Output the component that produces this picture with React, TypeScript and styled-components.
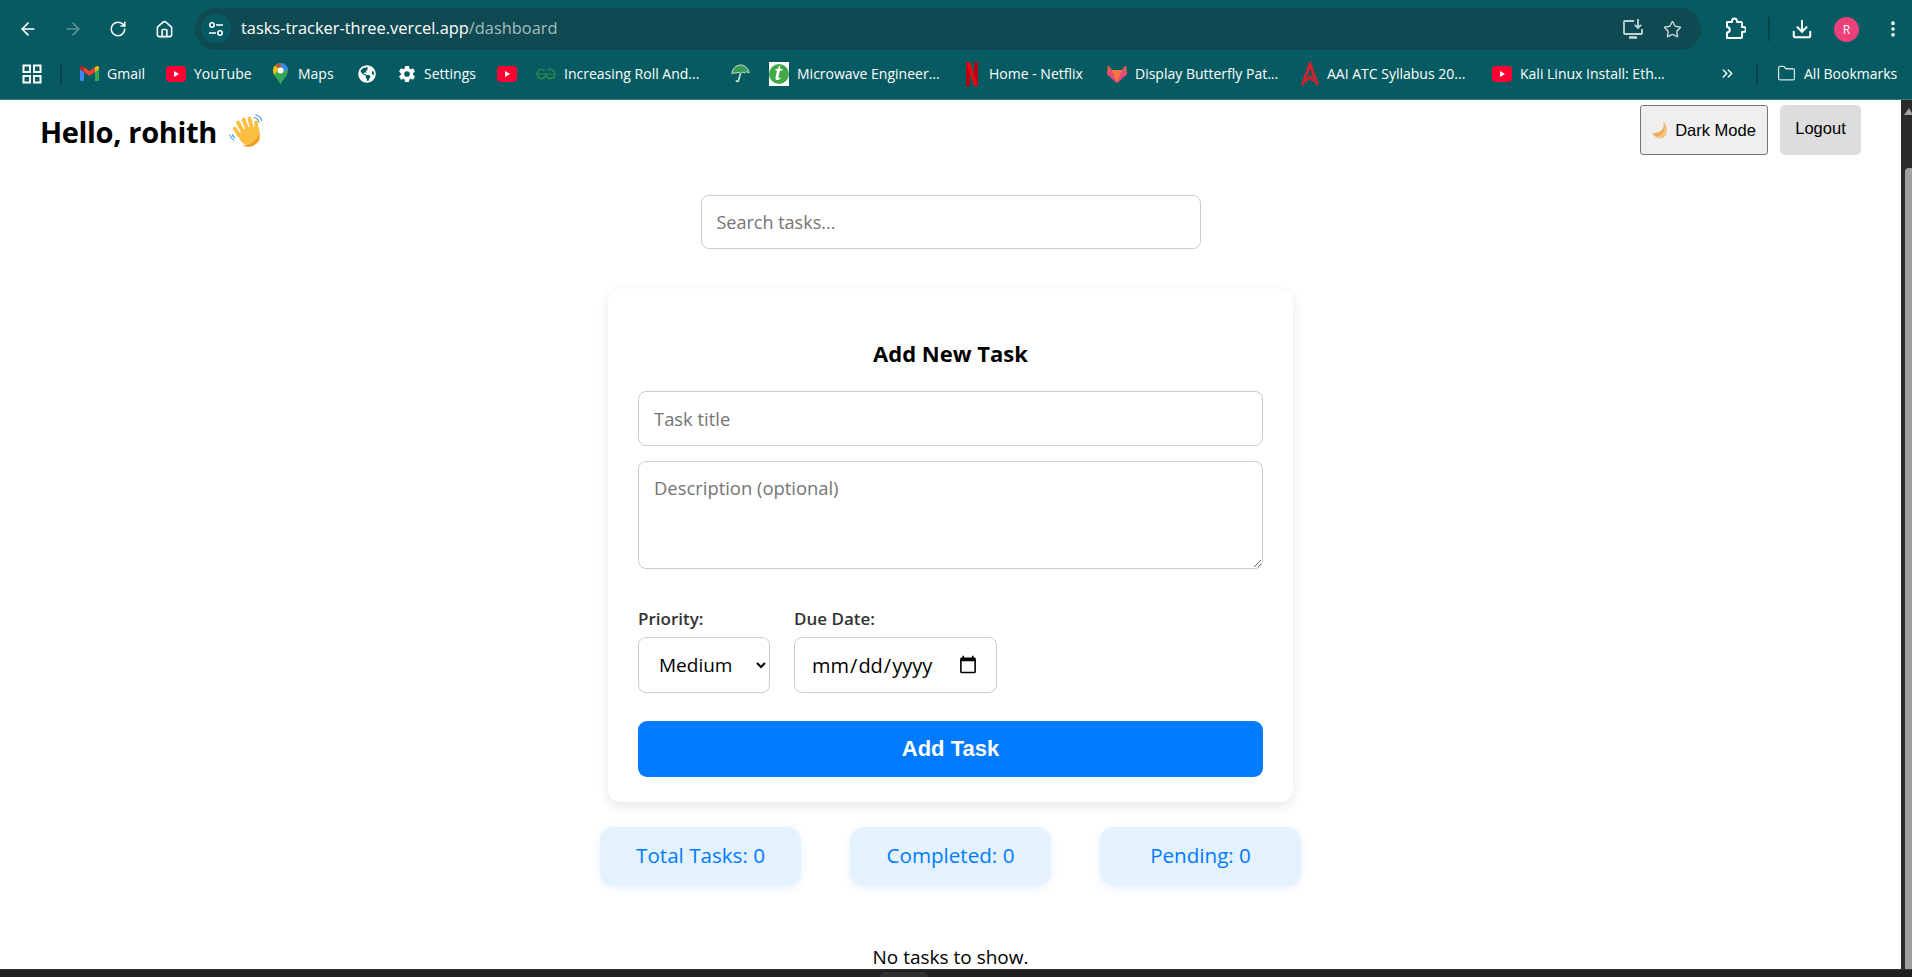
import React from "react";
import styled, { createGlobalStyle } from "styled-components";
import {
  ArrowLeft,
  ArrowRight,
  RotateCw,
  Home,
  Star,
  Download,
  EllipsisVertical,
  Folder,
  ChevronsRight,
} from "lucide-react";
import { IoSettingsSharp } from "react-icons/io5";
import { FaGlobeAmericas } from "react-icons/fa";

const UI = `"Open Sans", "Noto Sans", sans-serif`;

const Global = createGlobalStyle`
  html, body { margin: 0; padding: 0; height: 100%; overflow: hidden; background: #fff; }
  * { box-sizing: border-box; }
  #root { height: 100%; }
`;

const Shell = styled.div`
  height: 977px;
  display: flex;
  flex-direction: column;
  font-family: ${UI};
  color: #000;
`;

const Chrome = styled.header`
  flex: 0 0 100px;
  background: #055b61;
  border-bottom: 1px solid #3a7b80;
  display: flex;
  flex-direction: column;
  color: #fff;
`;

const NavRow = styled.div`
  height: 50px;
  display: flex;
  align-items: center;
  padding: 8px 0 0 5px;
`;

const NavButton = styled.span<{ $w: number; $dim?: boolean }>`
  flex: 0 0 ${(p) => p.$w}px;
  display: flex;
  align-items: center;
  justify-content: center;
  color: ${(p) => (p.$dim ? "#5d9296" : "#ffffff")};
`;

const Omnibox = styled.div`
  flex: 0 0 1506px;
  height: 42px;
  margin: 0 23px 0 8px;
  border-radius: 21px;
  background: #0f4a52;
  display: flex;
  align-items: center;
  padding: 0 19px 0 6px;
`;

const SiteChip = styled.span`
  width: 30px;
  height: 30px;
  border-radius: 50%;
  background: #055b61;
  display: flex;
  align-items: center;
  justify-content: center;
  margin-right: 10px;
`;

const UrlHost = styled.span`
  font-size: 16.4px;
  line-height: 20px;
  padding-bottom: 2px;
  color: #fff;
`;

const UrlPath = styled.span`
  font-size: 16.4px;
  line-height: 20px;
  padding-bottom: 2px;
  color: #a5bdc0;
`;

const OmniActions = styled.span`
  margin-left: auto;
  display: flex;
  align-items: center;
  gap: 19px;
  color: #c3d3d5;
`;

const Divider = styled.span<{ $h?: number; $l: number; $r: number }>`
  flex: 0 0 2px;
  height: ${(p) => p.$h ?? 24}px;
  background: #07444a;
  margin: 0 ${(p) => p.$r}px 0 ${(p) => p.$l}px;
`;

const Avatar = styled.span`
  width: 25px;
  height: 25px;
  border-radius: 50%;
  background: #ec407a;
  color: #fff;
  font-size: 12px;
  display: flex;
  align-items: center;
  justify-content: center;
  margin: 0 24px 0 21px;
`;

const BookmarkRow = styled.nav`
  height: 49px;
  display: flex;
  align-items: center;
  padding-left: 22px;
  padding-bottom: 2px;
  font-size: 14px;
`;

const BookmarkStart = styled.span`
  flex: 0 0 9px;
`;

const Bookmark = styled.span<{ $w: number }>`
  flex: 0 0 ${(p) => p.$w}px;
  display: flex;
  align-items: center;
  gap: 8px;
  white-space: nowrap;
  color: #fff;
`;

const IconSlot = styled.span`
  flex: 0 0 19px;
  height: 20px;
  display: flex;
  align-items: center;
  justify-content: center;
`;

const PageRow = styled.div`
  flex: 1;
  min-height: 0;
  display: flex;
`;

const Page = styled.main`
  flex: 1;
  min-width: 0;
  overflow: hidden;
`;

const Scrollbar = styled.div`
  flex: 0 0 11px;
  background: #2b2b2b;
  position: relative;
`;

const ScrollArrow = styled.div`
  position: absolute;
  top: 8px;
  left: 3px;
  width: 0;
  height: 0;
  border-left: 5px solid transparent;
  border-right: 4px solid transparent;
  border-bottom: 7px solid #a0a0a0;
`;

const ScrollThumb = styled.div`
  position: absolute;
  top: 68px;
  left: 4px;
  right: 0;
  bottom: 0;
  background: #a0a0a0;
  border-radius: 4px 0 0 0;
`;

const BottomBar = styled.div`
  flex: 0 0 8px;
  background: #1f1f1f;
  border-top: 1px solid #333;
  display: flex;
  justify-content: center;
  padding: 2px 0 0 0;
`;

const BottomThumb = styled.div`
  width: 48px;
  margin-right: 104px;
  background: #2f2f2f;
  border-radius: 5px 5px 0 0;
`;

const TopBar = styled.div`
  display: flex;
  align-items: flex-start;
  justify-content: space-between;
  padding: 5px 40px 0 40px;
  height: 95px;
`;

const Greeting = styled.h1`
  margin: 0;
  padding-top: 6px;
  display: flex;
  align-items: center;
  gap: 12px;
  font-size: 29px;
  font-weight: 700;
  line-height: 42px;
  letter-spacing: -0.35px;
`;

const TopActions = styled.div`
  display: flex;
  gap: 12px;
`;

const ModeButton = styled.button`
  height: 50px;
  width: 128px;
  border: 1px solid #767676;
  border-radius: 3px;
  background: #efefef;
  font-family: "Liberation Sans", Arial, sans-serif;
  font-size: 16.5px;
  display: flex;
  align-items: center;
  justify-content: center;
  gap: 7px;
  padding: 0;
  color: #000;
`;

const LogoutButton = styled.button`
  height: 50px;
  width: 81px;
  border: 0;
  border-radius: 5px;
  background: #ddd;
  font-family: "Liberation Sans", Arial, sans-serif;
  font-size: 16.5px;
  padding: 0 0 4px;
  color: #000;
`;

const Center = styled.div`
  display: flex;
  flex-direction: column;
  align-items: center;
`;

const fieldBase = `
  border: 1px solid #ccc;
  border-radius: 8px;
  background: #fff;
  font-family: ${UI};
  font-size: 18.4px;
  outline: none;
  &::placeholder { color: #757575; }
`;

const SearchInput = styled.input`
  ${fieldBase}
  width: 500px;
  height: 54px;
  padding: 0 15px;
  font-size: 18px;
`;

const Card = styled.section`
  margin-top: 40px;
  width: 685px;
  height: 513px;
  border-radius: 12px;
  background: #fff;
  box-shadow: 0 4px 12px rgba(0, 0, 0, 0.1);
  padding: 50px 30px 0;
  display: flex;
  flex-direction: column;
`;

const CardTitle = styled.h2`
  margin: 0 0 24px;
  text-align: center;
  font-size: 22px;
  line-height: 28px;
  font-weight: 700;
`;

const TitleInput = styled.input`
  ${fieldBase}
  height: 55px;
  padding: 0 15px;
  margin-bottom: 15px;
`;

const DescArea = styled.textarea`
  ${fieldBase}
  height: 108px;
  padding: 13px 15px;
  margin-bottom: 39px;
  display: block;
  resize: vertical;
`;

const Options = styled.div`
  display: flex;
  gap: 24px;
`;

const OptionGroup = styled.label`
  display: flex;
  flex-direction: column;
  gap: 7px;
  font-size: 17px;
  line-height: 22px;
  font-weight: 600;
  color: #333;
`;

const PrioritySelect = styled.select`
  ${fieldBase}
  width: 132px;
  height: 56px;
  padding: 0 0 0 16px;
  font-size: 19px;
  color: #000;
`;

const DateInput = styled.input`
  ${fieldBase}
  width: 203px;
  height: 56px;
  padding: 0 16px;
  font-size: 20px;
  color: #000;
`;

const AddButton = styled.button`
  margin-top: 28px;
  height: 56px;
  border: 0;
  border-radius: 9px;
  background: #007bff;
  color: #fff;
  font-family: "Liberation Sans", Arial, sans-serif;
  font-size: 22px;
  font-weight: 700;
`;

const Stats = styled.div`
  margin-top: 25px;
  display: flex;
  gap: 49px;
`;

const Stat = styled.div`
  width: 201px;
  height: 59px;
  border-radius: 14px;
  background: #e3f2fd;
  color: #007bff;
  box-shadow: 0 2px 8px rgba(0, 123, 255, 0.1);
  font-size: 20.6px;
  font-weight: 500;
  padding-bottom: 4px;
  display: flex;
  align-items: center;
  justify-content: center;
`;

const EmptyNote = styled.p`
  margin: 59px 0 0;
  font-size: 19px;
  line-height: 24px;
  color: #000;
  text-align: center;
`;

const TuneIcon = () => (
  <svg width="18" height="18" viewBox="0 0 18 18" fill="none" stroke="#fff" strokeWidth="1.6">
    <circle cx="5" cy="5" r="2.2" />
    <path d="M9 5h7M2 13h7" />
    <circle cx="13" cy="13" r="2.2" />
  </svg>
);

const AppsIcon = () => (
  <svg width="20" height="20" viewBox="0 0 20 20" fill="none" stroke="#fff" strokeWidth="2">
    <rect x="1.500" y="1.500" width="6.500" height="6.500" />
    <rect x="12" y="1.500" width="6.500" height="6.500" />
    <rect x="1.500" y="12" width="6.500" height="6.500" />
    <rect x="12" y="12" width="6.500" height="6.500" />
  </svg>
);

const InstallIcon = () => (
  <svg width="22" height="22" viewBox="0 0 22 22" fill="none" stroke="#c3d3d5" strokeWidth="1.800">
    <path d="M12 3H3a1 1 0 0 0-1 1v11a1 1 0 0 0 1 1h16a1 1 0 0 0 1-1v-4" />
    <path d="M16 1v9M12.800 6.800L16 10l3.200-3.200" />
    <path d="M7 19.500h8" strokeWidth="2.600" />
  </svg>
);

const ExtensionIcon = () => (
  <svg width="22" height="24" viewBox="0 0 22 24" fill="none" stroke="#fff" strokeWidth="2" strokeLinejoin="round">
    <path d="M3 5h5V4a2.500 2.500 0 0 1 5 0v1h4a1 1 0 0 1 1 1v4h1.500a2.500 2.500 0 0 1 0 5H18v5a1 1 0 0 1-1 1H3v-5.500a2.700 2.700 0 0 0 0-5.500z" />
  </svg>
);

const GmailIcon = () => (
  <svg width="19" height="15" viewBox="0 0 19 15">
    <path d="M0 3v10.500A1.500 1.500 0 0 0 1.500 15H4V6z" fill="#4285f4" />
    <path d="M15 15h2.500a1.500 1.500 0 0 0 1.500-1.500V3l-4 3z" fill="#34a853" />
    <path d="M15 1v5l4-3V1.800C19 .4 17.500-.4 16.400.5z" fill="#fbbc04" />
    <path d="M4 6V1L9.500 5 15 1v5l-5.500 4z" fill="#ea4335" />
    <path d="M0 1.800V3l4 3V1L2.600.500C1.500-.4 0 .4 0 1.800z" fill="#c5221f" />
  </svg>
);

const YouTubeIcon = () => (
  <svg width="20" height="16" viewBox="0 0 20 16">
    <rect width="20" height="16" rx="4" fill="#ff0033" />
    <path d="M8 5l5 3-5 3z" fill="#fff" />
  </svg>
);

const MapsIcon = () => (
  <svg width="15" height="22" viewBox="0 0 15 22">
    <path d="M7.500 22C6.500 17 0 13.500 0 7.500a7.500 7.500 0 0 1 15 0C15 13.500 8.500 17 7.500 22z" fill="#34a853" />
    <path d="M2 2.500A7.500 7.500 0 0 1 7.500 0v5z" fill="#ea4335" />
    <path d="M7.500 0A7.500 7.500 0 0 1 15 7.500l-5 0z" fill="#4285f4" />
    <path d="M0 7.500A7.500 7.500 0 0 1 2 2.500l3.500 3.500L1.500 12A8 8 0 0 1 0 7.500z" fill="#fbbc04" />
    <circle cx="7.500" cy="7.500" r="3" fill="#fff" />
  </svg>
);

const GeeksIcon = () => (
  <svg width="20" height="12" viewBox="0 0 20 12" fill="none" stroke="#2f8d46" strokeWidth="1.200">
    <path d="M1 6h18M10 6a4.500 4.500 0 1 1-1.500-3.500M10 6a4.500 4.500 0 1 0 1.500-3.500M1 6a4.500 4.500 0 0 0 8 3M19 6a4.500 4.500 0 0 1-8 3" />
  </svg>
);

const UmbrellaIcon = () => (
  <svg width="19" height="20" viewBox="0 0 19 20">
    <path d="M1 10C1 4 6 1 10 1s8 4 8 8c-2-1.500-3-1.500-4.500 0C12 8 11 8 9.500 9.500 8 8 6 8 5 9.500 4 8.500 2.500 8.500 1 10z" fill="#3c9a57" stroke="#cfe5d4" strokeWidth="1" />
    <path d="M9.500 9.500l-2 7c-.3 1.500-2.300 1.200-2.200-.4" fill="none" stroke="#d6e8da" strokeWidth="1.500" />
  </svg>
);

const TutorialIcon = () => (
  <svg width="20" height="24" viewBox="0 0 20 24">
    <rect width="20" height="24" fill="#fff" />
    <circle cx="10" cy="12" r="10" fill="#43a846" />
    <path d="M11 3l-2.500 4H6.500v1.500h1.500l-1.500 7c-.5 3 2.500 3.500 5 1l-.4-.9c-1 .7-1.900.7-1.700-.3L11 8.500h2.500V7H11.200z" fill="#fff" />
  </svg>
);

const NetflixIcon = () => (
  <svg width="12" height="24" viewBox="0 0 12 24">
    <path d="M0 0h4v24H0z" fill="#b1060f" />
    <path d="M8 0h4v24H8z" fill="#b1060f" />
    <path d="M0 0h4l8 24H8z" fill="#e50914" />
  </svg>
);

const FoxIcon = () => (
  <svg width="20" height="20" viewBox="0 0 20 20">
    <path d="M1 1l4 5h10l4-5 1 9-10 9L0 10z" fill="#ef5a4c" />
    <path d="M5 6h10l-5 13z" fill="#f07a3c" />
    <path d="M0 10l5-4 5 13zM20 10l-5-4-5 13z" fill="#e74a82" />
  </svg>
);

const AaiIcon = () => (
  <svg width="18" height="24" viewBox="0 0 18 24" fill="none" stroke="#d5202e" strokeWidth="3">
    <path d="M1.500 23L9 2l7.500 21" />
    <path d="M5 19l4-4 4 4" strokeWidth="2.500" />
  </svg>
);

const WaveEmoji = () => (
  <svg width="34" height="36" viewBox="0 0 34 36">
    <g fill="none" stroke="#4f9edb" strokeWidth="1.200" strokeLinecap="round">
      <path d="M25 3.500c2.500.3 4.200 2 5 4.500M26.500 1c3 .4 5.300 2.500 6.300 5.500" />
      <path d="M1 21c.4 2.200 1.700 3.800 3.600 5M3.500 20.500c.3 1.300 1 2.300 2.100 3.100" />
    </g>
    <g fill="#fbbe3f" stroke="#fbbe3f" strokeLinecap="round">
      <path d="M10 21a11 10.500 0 0 0 20 5.500c1.300-3.800 0-8-.6-13L18 14z" strokeWidth="1" />
      <path d="M10 21 L5.800 14.500" strokeWidth="3.800" />
      <path d="M14 18 L9 8.500" strokeWidth="3.800" />
      <path d="M18.500 16 L14.500 5.500" strokeWidth="3.800" />
      <path d="M23 15 L20.500 4.500" strokeWidth="3.800" />
      <path d="M27.500 17 L27 8.500" strokeWidth="3.800" />
    </g>
    <path d="M13 31c5 3.500 13.500 2 16.500-5 .9-2.200 1-4.500.7-7-1 6.500-9 13.500-17.200 12z" fill="#ed9c2c" />
  </svg>
);

const MoonEmoji = () => (
  <svg width="16" height="18" viewBox="0 0 16 18">
    <path d="M11 .5c2.500 6-1 11.500-10.500 11.500C2 16 6 18 10 17c5-1.300 7-10.500 1-16.500z" fill="#f2ae57" />
    <path d="M12 4c2 5-1 10.500-8 12.500 3 1 7 .5 9-2.500 2.200-3.500 1-7.500-1-10z" fill="#f5c987" />
  </svg>
);

const bookmarks: { w: number; label?: string; icon: React.ReactNode }[] = [
  { w: 86, label: "Gmail", icon: <GmailIcon /> },
  { w: 105, label: "YouTube", icon: <YouTubeIcon /> },
  { w: 86, label: "Maps", icon: <MapsIcon /> },
  { w: 40, icon: <FaGlobeAmericas size={18} color="#fff" /> },
  { w: 100, label: "Settings", icon: <IoSettingsSharp size={18} color="#fff" /> },
  { w: 39, icon: <YouTubeIcon /> },
  { w: 195, label: "Increasing Roll And...", icon: <GeeksIcon /> },
  { w: 38, icon: <UmbrellaIcon /> },
  { w: 193, label: "Microwave Engineer...", icon: <TutorialIcon /> },
  { w: 145, label: "Home - Netflix", icon: <NetflixIcon /> },
  { w: 193, label: "Display Butterfly Pat...", icon: <FoxIcon /> },
  { w: 192, label: "AAI ATC Syllabus 20...", icon: <AaiIcon /> },
  { w: 227, label: "Kali Linux Install: Eth...", icon: <YouTubeIcon /> },
];

export default function App() {
  return (
    <>
      <Global />
      <Shell>
        <Chrome>
          <NavRow>
            <NavButton $w={46}>
              <ArrowLeft size={20} strokeWidth={2} />
            </NavButton>
            <NavButton $w={44} $dim>
              <ArrowRight size={20} strokeWidth={2} />
            </NavButton>
            <NavButton $w={46}>
              <RotateCw size={18} strokeWidth={2} />
            </NavButton>
            <NavButton $w={46}>
              <Home size={19} strokeWidth={2} />
            </NavButton>
            <Omnibox>
              <SiteChip>
                <TuneIcon />
              </SiteChip>
              <UrlHost>tasks-tracker-three.vercel.app</UrlHost>
              <UrlPath>/dashboard</UrlPath>
              <OmniActions>
                <InstallIcon />
                <Star size={19} strokeWidth={1.8} />
              </OmniActions>
            </Omnibox>
            <NavButton $w={20}>
              <ExtensionIcon />
            </NavButton>
            <Divider $l={22} $r={21} />
            <NavButton $w={22}>
              <Download size={22} strokeWidth={2.2} />
            </NavButton>
            <Avatar>R</Avatar>
            <NavButton $w={6}>
              <EllipsisVertical size={20} strokeWidth={2.4} />
            </NavButton>
          </NavRow>
          <BookmarkRow>
            <NavButton $w={20}>
              <AppsIcon />
            </NavButton>
            <Divider $l={18} $r={9} $h={22} />
            <BookmarkStart />
            {bookmarks.map((b, i) => (
              <Bookmark key={i} $w={b.w}>
                <IconSlot>{b.icon}</IconSlot>
                {b.label}
              </Bookmark>
            ))}
            <NavButton $w={16}>
              <ChevronsRight size={17} strokeWidth={2} />
            </NavButton>
            <Divider $l={20} $r={19} $h={22} />
            <Bookmark $w={130}>
              <IconSlot>
                <Folder size={19} strokeWidth={1.6} color="#d5e2e3" />
              </IconSlot>
              All Bookmarks
            </Bookmark>
          </BookmarkRow>
        </Chrome>
        <PageRow>
          <Page>
            <TopBar>
              <Greeting>
                Hello, rohith
                <WaveEmoji />
              </Greeting>
              <TopActions>
                <ModeButton>
                  <MoonEmoji />
                  Dark Mode
                </ModeButton>
                <LogoutButton>Logout</LogoutButton>
              </TopActions>
            </TopBar>
            <Center>
              <SearchInput placeholder="Search tasks..." />
              <Card>
                <CardTitle>Add New Task</CardTitle>
                <TitleInput placeholder="Task title" />
                <DescArea placeholder="Description (optional)" />
                <Options>
                  <OptionGroup>
                    Priority:
                    <PrioritySelect defaultValue="Medium">
                      <option>Low</option>
                      <option>Medium</option>
                      <option>High</option>
                    </PrioritySelect>
                  </OptionGroup>
                  <OptionGroup>
                    Due Date:
                    <DateInput type="date" />
                  </OptionGroup>
                </Options>
                <AddButton>Add Task</AddButton>
              </Card>
              <Stats>
                <Stat>Total Tasks: 0</Stat>
                <Stat>Completed: 0</Stat>
                <Stat>Pending: 0</Stat>
              </Stats>
              <EmptyNote>No tasks to show.</EmptyNote>
            </Center>
          </Page>
          <Scrollbar>
            <ScrollArrow />
            <ScrollThumb />
          </Scrollbar>
        </PageRow>
        <BottomBar>
          <BottomThumb />
        </BottomBar>
      </Shell>
    </>
  );
}
